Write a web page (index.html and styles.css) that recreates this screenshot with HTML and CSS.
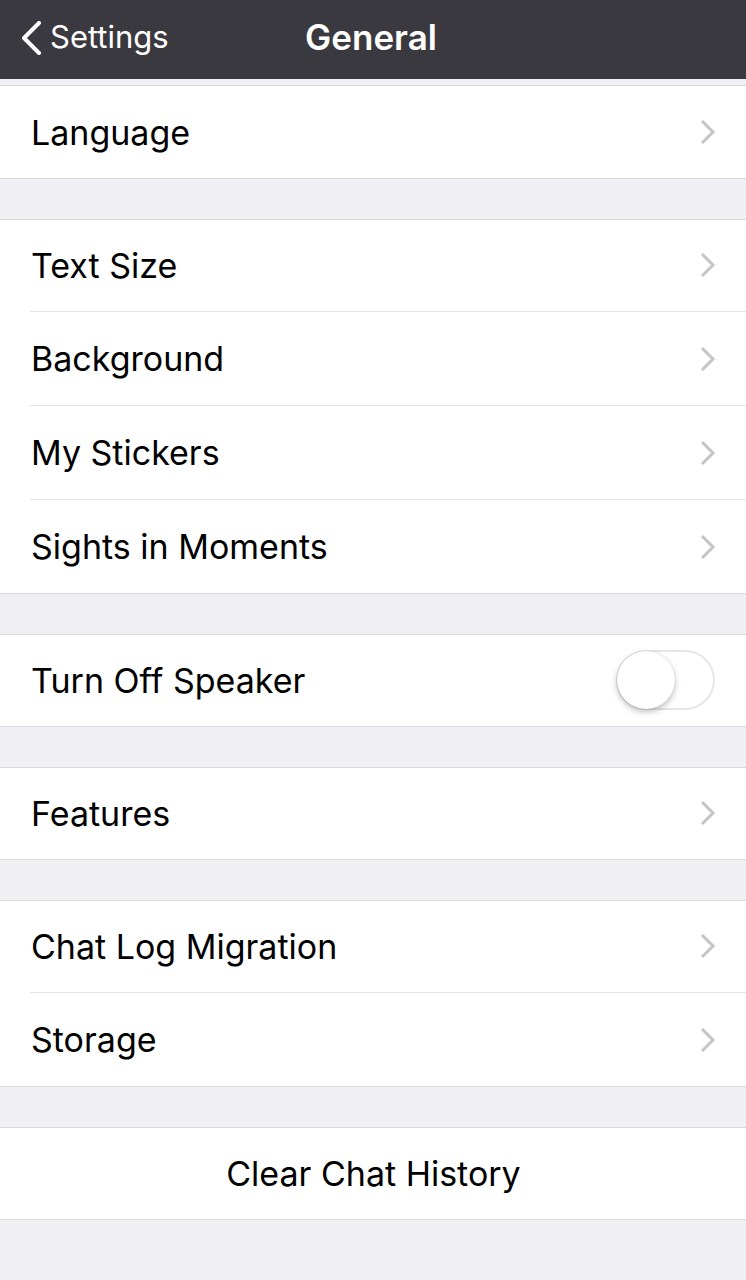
FILE: index.html
```
<!DOCTYPE html>
<html>
<head>
<meta charset="utf-8">
<link rel="stylesheet" href="styles.css">
</head>
<body>
<header class="nav">
  <div class="back">
    <svg class="back-icon" width="24" height="34" viewBox="0 0 24 34"><path d="M20 2 L5 17 L20 32" fill="none" stroke="#fff" stroke-width="4" stroke-linecap="round" stroke-linejoin="round"/></svg>
    <span>Settings</span>
  </div>
  <div class="title">General</div>
</header>
<div class="top-gap"></div>
<main>
  <section class="group">
    <div class="row"><span>Language</span><svg class="chev" viewBox="0 0 16 26"><path d="M2 2 L13 13 L2 24" fill="none" stroke="#c4c4c9" stroke-width="3"/></svg></div>
  </section>
  <section class="group">
    <div class="row"><span>Text Size</span><svg class="chev" viewBox="0 0 16 26"><path d="M2 2 L13 13 L2 24" fill="none" stroke="#c4c4c9" stroke-width="3"/></svg></div>
    <div class="row"><span>Background</span><svg class="chev" viewBox="0 0 16 26"><path d="M2 2 L13 13 L2 24" fill="none" stroke="#c4c4c9" stroke-width="3"/></svg></div>
    <div class="row"><span>My Stickers</span><svg class="chev" viewBox="0 0 16 26"><path d="M2 2 L13 13 L2 24" fill="none" stroke="#c4c4c9" stroke-width="3"/></svg></div>
    <div class="row"><span>Sights in Moments</span><svg class="chev" viewBox="0 0 16 26"><path d="M2 2 L13 13 L2 24" fill="none" stroke="#c4c4c9" stroke-width="3"/></svg></div>
  </section>
  <section class="group">
    <div class="row"><span>Turn Off Speaker</span><div class="toggle"><div class="knob"></div></div></div>
  </section>
  <section class="group">
    <div class="row"><span>Features</span><svg class="chev" viewBox="0 0 16 26"><path d="M2 2 L13 13 L2 24" fill="none" stroke="#c4c4c9" stroke-width="3"/></svg></div>
  </section>
  <section class="group">
    <div class="row"><span>Chat Log Migration</span><svg class="chev" viewBox="0 0 16 26"><path d="M2 2 L13 13 L2 24" fill="none" stroke="#c4c4c9" stroke-width="3"/></svg></div>
    <div class="row"><span>Storage</span><svg class="chev" viewBox="0 0 16 26"><path d="M2 2 L13 13 L2 24" fill="none" stroke="#c4c4c9" stroke-width="3"/></svg></div>
  </section>
  <section class="group">
    <div class="row center"><span>Clear Chat History</span></div>
  </section>
</main>
</body>
</html>
```
FILE: styles.css
```
* { box-sizing: border-box; }
html, body { margin: 0; padding: 0; }
body {
  width: 746px;
  height: 1280px;
  background: #efeff4;
  font-family: Inter, "Noto Sans", sans-serif;
  color: #000;
  overflow: hidden;
}
.nav {
  height: 79px;
  background: #3a393f;
  position: relative;
  display: flex;
  align-items: center;
  color: #fff;
  padding-bottom: 6px;
}
.back {
  display: flex;
  align-items: center;
  padding-left: 19px;
  gap: 7px;
  font-size: 31px;
}
.back-icon { width: 24px; height: 34px; margin-top: 2px; }
.title {
  position: absolute;
  left: 0;
  right: 0;
  top: 0;
  height: 73px;
  display: flex;
  align-items: center;
  justify-content: center;
  font-size: 35px;
  font-weight: 600;
  padding-right: 4px;
  pointer-events: none;
}
.top-gap {
  height: 7px;
  border-bottom: 1px solid #d9d9de;
}
.group {
  background: #fff;
  border-bottom: 1px solid #d9d9de;
  margin-bottom: 39.5px;
}
.group + .group { border-top: 1px solid #d9d9de; }
.row {
  height: 91.5px;
  display: flex;
  align-items: center;
  justify-content: space-between;
  margin-left: 30px;
  padding: 0 30px 0 1px;
  font-size: 34px;
}
.row + .row { border-top: 1px solid #e6e6e9; height: 94px; }
.group:first-child .row { height: 92px; }
.row.center { justify-content: center; margin-left: 0; padding: 0 0 0 1px; }
.chev { width: 16px; height: 26px; }
.toggle {
  width: 99px;
  height: 60px;
  border-radius: 30px;
  border: 2px solid #e6e6e6;
  background: #fff;
  margin-right: 1px;
  position: relative;
}
.knob {
  position: absolute;
  left: -1px;
  top: -1px;
  width: 58px;
  height: 58px;
  border-radius: 50%;
  background: #fff;
  box-shadow: 0 3px 6px rgba(0,0,0,0.25), 0 0 1px rgba(0,0,0,0.2);
}
```
